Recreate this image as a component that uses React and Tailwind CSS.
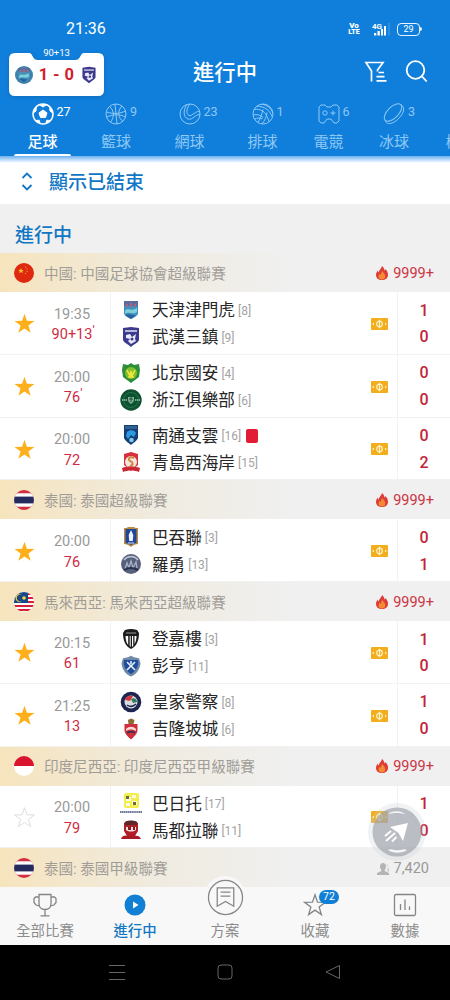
import React from 'react';
import clsx from 'clsx';

const STAR = 'M12 1.8l2.5 7.4 7.9.1-6.3 4.7 2.3 7.6-6.4-4.5-6.4 4.5 2.3-7.6L1.6 9.3l7.9-.1z';

// Small club crests, all on a 22x22 grid
const crests = {
  tianjin: (
    <>
      <path d="M4 2h14v13c-2 3-5 4-7 5-2-1-5-2-7-5z" fill="#3f92bd" />
      <path d="M4 2h14v5H4z" fill="#5a6c9d" />
      <path d="M6 5h2v3H6zM10 4h2v4h-2zM14 5h2v3h-2z" fill="#a9687f" />
      <path d="M5 12c3-4 6 1 12-3v4c-4 3-8-1-12 2z" fill="#7fd0d8" />
      <path d="M5 16c4-2 8 1 11 0l-5 4z" fill="#2a5fa0" />
    </>
  ),
  wuhan: (
    <>
      <path d="M3 2l8-1 8 1v12c-1 3-5 4-8 7-3-3-7-4-8-7z" fill="#3b3a8c" />
      <path d="M5 4h12v2H5z" fill="#b9b8dc" />
      <path d="M6 9l4-1 2 3 4-3-1 5 1 2-5 3-3-3 2-2-4-1z" fill="#e9e8f7" />
      <circle cx="12" cy="13" r="1.5" fill="#3b3a8c" />
    </>
  ),
  beijing: (
    <>
      <path d="M11 1l3 2 5-1 1 6-1 7-8 6-8-6-1-7 1-6 5 1z" fill="#2f8e3a" />
      <circle cx="11" cy="11" r="6" fill="#7fc02f" />
      <path d="M7 8l3 6 1-5 1 5 3-6M8 15h6" stroke="#f3e43b" strokeWidth="1.6" fill="none" />
    </>
  ),
  zhejiang: (
    <>
      <circle cx="11" cy="11" r="10.7" fill="#0d5131" />
      <circle cx="11" cy="11" r="7.5" fill="none" stroke="#2f7b56" strokeWidth=".8" />
      <path d="M2 11h5M15 11h5" stroke="#9fc6af" strokeWidth="1.6" strokeDasharray="1.4 .6" />
      <path d="M8 8h6v3c0 2-2 3-3 4-1-1-3-2-3-4z" fill="#7fae94" />
      <path d="M9 10h4M11 8v5" stroke="#0d5131" strokeWidth=".9" />
    </>
  ),
  nantong: (
    <>
      <path d="M4 1h14v13c-1 3-5 5-7 7-2-2-6-4-7-7z" fill="#163e74" />
      <path d="M5 2h12v3H5z" fill="#2f6193" />
      <path d="M7 8c3-3 8-2 9 1l-2 4-3-2-3 4-2-3z" fill="#2a9be0" />
      <circle cx="11.500" cy="16" r="2.300" fill="#7cc8ee" />
    </>
  ),
  qingdao: (
    <>
      <path d="M4 3l7-2 7 2v11l-7 6-7-6z" fill="#d7303a" />
      <circle cx="11" cy="11" r="6" fill="#f4e6dc" />
      <path d="M14 7c-4-2-7 1-4 3 3 1 4 4 0 5" stroke="#d08b46" strokeWidth="2" fill="none" />
      <path d="M2 17c5-2 13-2 18 0l-1 4c-5-2-11-2-16 0z" fill="#cb2634" />
    </>
  ),
  buriram: (
    <>
      <path d="M4 2c2 0 3 0 4-1h6c1 1 2 1 4 1v16c-2 0-5 1-7 3-2-2-5-3-7-3z" fill="#b98c40" />
      <path d="M5.500 3h11v14c-2 0-4 1-5.500 2-1.500-1-3.500-2-5.500-2z" fill="#1e479c" />
      <path d="M11 4l2.300 5-.5 6H9.200l-.5-6z" fill="#eef2fb" />
      <path d="M8 17h6" stroke="#d9e2f6" />
    </>
  ),
  rayong: (
    <>
      <circle cx="11" cy="11" r="10" fill="#56607b" />
      <path d="M4 7c4-5 11-4 14 0" stroke="#b8c0d0" strokeWidth="1.600" fill="none" />
      <path d="M5 16l2-6 2 5 2-7 2 7 3-6 1 6" stroke="#aab3c6" strokeWidth="1.300" fill="none" />
      <path d="M4 17c5-3 10-2 14 0" stroke="#28324f" strokeWidth="2" fill="none" />
    </>
  ),
  terengganu: (
    <>
      <path d="M5 2c4-1.500 8-1.500 12 0l2 3c0 7-2 13-8 16C5 18 3 12 3 5z" fill="#1b1b1b" />
      <path d="M5.500 8h2.700v9C6.500 15 5.600 12 5.500 8zM9.700 8h1v11l-1-1zM12 8h1.200v10l-1.200 1zM14.500 8h2c0 4-1 6-2 8z" fill="#fff" />
      <path d="M6 5h10" stroke="#999" />
    </>
  ),
  pahang: (
    <>
      <path d="M11 .8l3 1.500 5 1 1.500 5C20 14 17 19 11 21.500 5 19 2 14 1.500 8.300l1.500-5 5-1z" fill="#7189a9" />
      <path d="M4 5h14c1 6-2 11-7 14C6 16 3 11 4 5z" fill="#1f4c9b" />
      <path d="M7 7l4 4 4-4M7 15l4-4 4 4M11 6v3" stroke="#e8eef8" strokeWidth="1.600" fill="none" />
    </>
  ),
  police: (
    <>
      <circle cx="11" cy="11" r="10.300" fill="#1d2650" />
      <circle cx="11" cy="11" r="6.500" fill="#d9dde2" />
      <path d="M5 9c1-4 5-5 8-4l-3 5z" fill="#d8343c" />
      <path d="M11 8c3-2 6 0 6 3l-4 1z" fill="#2f7d59" />
      <path d="M7 14c3 2 6 2 9-1" stroke="#222a50" strokeWidth="1.500" fill="none" />
    </>
  ),
  klcity: (
    <>
      <path d="M8 2l3-1.500L14.500 2l-1 4h-5z" fill="#8c6a34" />
      <path d="M4.500 6h13v7c-1 4-4 6-6.500 8.500C8.500 19 5.500 17 4.500 13z" fill="#cf2f3b" />
      <path d="M6 11c3-3 7-3 10 0v2c-3-2-7-2-10 0z" fill="#f6d9da" />
      <path d="M7 15c3-2 5-2 8 0" stroke="#23305f" strokeWidth="1.500" fill="none" />
    </>
  ),
  barito: (
    <>
      <rect x="4" y="1" width="15" height="15" rx="2" fill="#f2ee4e" />
      <path d="M6 5h5v4H6zM12 9h5v4h-5zM12 3h4v3h-4zM6 11h4v3H6z" fill="#fdfce0" />
      <path d="M6 4h3v3H6zM13 10h3v3h-3z" fill="#6a6a38" />
      <path d="M0 20h22" stroke="#3e4877" strokeWidth="1.300" strokeDasharray="1.500 .4" />
    </>
  ),
  madura: (
    <>
      <path d="M4 4l3-2h8l3 2v8l-3 5H7l-3-5z" fill="#b21e28" />
      <path d="M5 3c3-2 9-2 12 0v3H5z" fill="#5d282b" />
      <path d="M6 8h10v3c-3 2-7 2-10 0z" fill="#f5e3e3" />
      <path d="M8 8h3v3H8zM13 8h2v3h-2z" fill="#8b1820" />
      <path d="M1 20c1-4 5-4 7-3h6c3-1 6 0 7 3z" fill="#a81b25" />
    </>
  ),
};

const flags = {
  china: (
    <>
      <rect width="20" height="20" fill="#de2910" />
      <path d="M7 5l.8 2h2l-1.600 1.300.6 2L7 9.100l-1.800 1.200.6-2L4.200 7h2z" fill="#f7c331" />
      <path d="M11 4h1M12.500 6h1M12.500 8.500h1M11 10.500h1" stroke="#f7a331" />
    </>
  ),
  thailand: (
    <>
      <rect width="20" height="20" fill="#d02f44" />
      <rect y="3.300" width="20" height="13.400" fill="#fff" />
      <rect y="6.600" width="20" height="6.800" fill="#242a5c" />
    </>
  ),
  malaysia: (
    <>
      <rect width="20" height="20" fill="#fff" />
      <path d="M0 2h20M0 6h20M0 10h20M0 14h20M0 18h20" stroke="#d5203a" strokeWidth="1.900" />
      <rect width="14" height="11" fill="#18488c" />
      <path d="M8 2.800a3.600 3.600 0 100 6.400 4 4 0 110-6.400z" fill="#f9d62e" />
      <circle cx="10" cy="6" r="1.800" fill="#f9d62e" />
    </>
  ),
  indonesia: (
    <>
      <rect width="20" height="20" fill="#fff" />
      <rect width="20" height="10" fill="#d9152b" />
    </>
  ),
};

const leagues = [
  {
    flag: 'china',
    name: '中國: 中國足球協會超級聯賽',
    heat: '9999+',
    matches: [
      { fav: true, time: '19:35', min: '90+13', tick: true, home: ['tianjin', '天津津門虎', 8, 1], away: ['wuhan', '武漢三鎮', 9, 0] },
      { fav: true, time: '20:00', min: '76', tick: true, home: ['beijing', '北京國安', 4, 0], away: ['zhejiang', '浙江俱樂部', 6, 0] },
      { fav: true, time: '20:00', min: '72', redCard: true, home: ['nantong', '南通支雲', 16, 0], away: ['qingdao', '青島西海岸', 15, 2] },
    ],
  },
  {
    flag: 'thailand',
    name: '泰國: 泰國超級聯賽',
    heat: '9999+',
    matches: [
      { fav: true, time: '20:00', min: '76', home: ['buriram', '巴吞聯', 3, 0], away: ['rayong', '羅勇', 13, 1] },
    ],
  },
  {
    flag: 'malaysia',
    name: '馬來西亞: 馬來西亞超級聯賽',
    heat: '9999+',
    matches: [
      { fav: true, time: '20:15', min: '61', home: ['terengganu', '登嘉樓', 3, 1], away: ['pahang', '彭亨', 11, 0] },
      { fav: true, time: '21:25', min: '13', home: ['police', '皇家警察', 8, 1], away: ['klcity', '吉隆坡城', 6, 0] },
    ],
  },
  {
    flag: 'indonesia',
    name: '印度尼西亞: 印度尼西亞甲級聯賽',
    heat: '9999+',
    matches: [
      { fav: false, time: '20:00', min: '79', home: ['barito', '巴日托', 17, 1], away: ['madura', '馬都拉聯', 11, 0] },
    ],
  },
  { flag: 'thailand', name: '泰國: 泰國甲級聯賽', viewers: '7,420', matches: [] },
];

const sportIcons = {
  football: (
    <>
      <circle cx="11" cy="11" r="10" strokeWidth="1.500" />
      <path d="M11 7l4 2.900-1.500 4.600h-5L7 9.900z" fill="currentColor" />
      <path d="M7.500 1.800L11 4l3.500-2.200zM1.200 10l2.800-2 .3-4zM20.800 10L18 8l-.3-4zM4 17.500l3.200-.3 1 3.200zM18 17.500l-3.200-.3-1 3.200z" fill="currentColor" />
    </>
  ),
  basketball: (
    <>
      <circle cx="11" cy="11" r="10" />
      <path d="M10 1l2 20M1.500 9c6 2 13 2 19-1M4.500 3.500c5 4 5 11 1 15.500M17 3c-5 5-4 12 1 15.500M2 14c6-3 13-3 18.500 0" />
    </>
  ),
  tennis: (
    <>
      <circle cx="11" cy="11" r="10" />
      <path d="M8 1.500C4 7 4 14 9 16c5 1.500 7-5 12-4.500M11 1C7 6 7 11 10 12.500c3 1 4-3 10.500-4.500" />
    </>
  ),
  volleyball: (
    <>
      <circle cx="11" cy="11" r="10" />
      <path d="M2 6.500c6-1 12 1 15 12M5 3.200c7 0 13 4 15 10.500M10 1.200c5 1 9 4 11 9M1.200 12c4-1 7 0 10 2.500M2.500 16c3-1.500 6-1 8 0M11 6.500c-1 4-2 8-5 13M15 9.500c-.5 4-2 8-5 11.400" />
    </>
  ),
  esports: (
    <>
      <path d="M3 2h4l2 2h4l2-2h4l2 2v14l-2 2h-3l-3-4H9l-3 4H3l-2-2V4z" strokeLinejoin="round" />
      <circle cx="7" cy="10" r="2.200" />
      <path d="M12.500 10h5M15 7.500v5" />
    </>
  ),
  hockey: (
    <>
      <ellipse cx="10" cy="9.500" rx="11" ry="5.500" transform="rotate(-45 10 9.500)" />
      <path d="M2.200 17.300c.5 3 3.500 4.200 7 2.700 5-2 10-7.500 11.300-12 .6-3-.4-5-2.700-6.300" />
    </>
  ),
};

const tabs = [
  { icon: 'football', label: '足球', count: 27, width: 'w-[73px]', active: true },
  { icon: 'basketball', label: '籃球', count: 9, width: 'w-[74px]' },
  { icon: 'tennis', label: '網球', count: 23, width: 'w-[73px]' },
  { icon: 'volleyball', label: '排球', count: 1, width: 'w-[73px]' },
  { icon: 'esports', label: '電競', count: 6, width: 'w-[59px]' },
  { icon: 'hockey', label: '冰球', count: 3, width: 'w-[72px]' },
  { label: '棒球', width: 'w-[61px]' },
];

function Crest({ name, className = 'size-[22px]' }) {
  return <svg viewBox="0 0 22 22" className={clsx('shrink-0', className)}>{crests[name]}</svg>;
}

function StatusBar() {
  return (
    <div className="h-[51px] pt-[7px] pl-[66px] pr-7 flex items-center justify-between text-white">
      <span className="text-[16px]">21:36</span>
      <div className="flex items-center">
        <div className="w-3 mr-3 text-[8px] leading-[7px] font-black text-center">
          <div>Vo</div>
          <div className="text-[7px]">LTE</div>
        </div>
        <svg viewBox="0 0 18 14" className="w-[18px] h-3.5 mr-[7px]" fill="#fff">
          <text x="0" y="6.500" fontSize="8" fontWeight="700">4G</text>
          <path d="M2 11h2.300v2.500H2zM5.500 9h2.300v4.500H5.500zM9 7h2v6.500H9zM12 4h2v9.500h-2z" />
          <path d="M16.500 1h1v12.500h-1z" opacity=".25" />
        </svg>
        <div className="flex items-center">
          <div className="w-[23px] h-[13px] rounded-[4px] border-[1.500px] border-white/90 text-[9px] leading-[10px] text-center">29</div>
          <div className="w-[2px] h-1 bg-white/90 rounded-r" />
        </div>
      </div>
    </div>
  );
}

function MiniScore() {
  return (
    <div className="relative w-[95px] h-[50px] ml-[9px]">
      <svg viewBox="0 0 95 50" className="absolute inset-0 drop-shadow-sm">
        <path d="M6 2h14c4 0 3 7 9 7h37c6 0 5-7 9-7h14q6 0 6 6v31q0 6-6 6H6q-6 0-6-6V8q0-6 6-6z" fill="#fff" />
      </svg>
      <div className="relative flex flex-col">
        <span className="h-2.5 -mt-[3px] text-center text-[9.500px] leading-[10px] text-white">90+13</span>
        <div className="h-[34px] flex items-center justify-between px-1.5">
          <span className="size-[18px] rounded-full overflow-hidden bg-[#3f83ad]">
            <Crest name="tianjin" className="size-[18px]" />
          </span>
          <span className="text-[16.500px] font-bold tracking-[0.4px] text-[#d3202f]">1 - 0</span>
          <Crest name="wuhan" className="size-[18px]" />
        </div>
      </div>
    </div>
  );
}

function Header() {
  return (
    <header className="h-[156px] shrink-0 bg-[#107fdc] text-white overflow-hidden">
      <StatusBar />
      <div className="h-[50px] grid grid-cols-3">
        <MiniScore />
        <h1 className="text-center text-[21.300px] leading-[44px] font-medium">進行中</h1>
        <div className="flex justify-end items-start gap-[18px] pt-[9px] pr-[22px]">
          <svg viewBox="0 0 23 23" className="size-[23px]" fill="none" stroke="#fff" strokeWidth="1.700">
            <path d="M7.500 21.500V11L2 2.500h17L13.500 10v1.500M14.500 12.500h5.500M12.500 16.700h8M12.500 20.800h10" />
          </svg>
          <svg viewBox="0 0 23 23" className="size-[23px]" fill="none" stroke="#fff" strokeWidth="1.800">
            <circle cx="10.500" cy="10" r="8.800" />
            <path d="M16.700 16.200l5 5.300" />
          </svg>
        </div>
      </div>
      <nav className="h-[55px] pl-1.5 flex">
        {tabs.map((tab) => (
          <div
            key={tab.label}
            className={clsx('shrink-0 h-full flex flex-col items-center', tab.width, tab.active ? 'text-white' : 'text-[#8fc8f4]')}
          >
            <div className="relative size-[22px] mt-[2px]">
              {tab.icon && (
                <svg viewBox="0 0 22 22" className="size-[22px]" fill="none" stroke="currentColor" strokeWidth="1">
                  {sportIcons[tab.icon]}
                </svg>
              )}
              <span className="absolute left-[25px] top-[1px] text-[12.500px] leading-4">{tab.count}</span>
            </div>
            <span className={clsx('mt-[7px] text-[15px] leading-[20px] whitespace-nowrap', tab.active && 'font-medium')}>{tab.label}</span>
            {tab.active && <span className="mt-[2px] w-[57px] h-[2px] bg-white rounded-t" />}
          </div>
        ))}
      </nav>
    </header>
  );
}

function Heat({ value }) {
  return (
    <div className="flex items-center gap-[5px] pt-[2px] text-[14.500px] text-[#cb3544]">
      <svg viewBox="0 0 12 14" className="w-3 h-3.5 -mt-[2px]">
        <path d="M6 0c2.500 2 2.300 4 2.800 4.500.6-.5.5-1.600.5-1.600C11.500 5 12 7 12 9c0 3-2.500 5-6 5s-6-2-6-5c0-2 1-3.300 1.800-4.500.2 1 .3 1.500 1 2C3 3.500 5.500 3 6 0z" fill="#dd3d36" />
        <path d="M6.300 5c1 2 3 3 3 5.500 0 2-1.300 3-3.300 3s-3.400-1-3.400-2.800C2.600 9 3.500 8 4 7.500c.2.800.5 1.200 1 1.500 0-1.500.5-3 1.300-4z" fill="#f58a35" />
      </svg>
      {value}
    </div>
  );
}

function LeagueHeader({ league }) {
  return (
    <div className="h-[39px] flex items-center pl-3.5 pr-4 bg-linear-to-r from-[#f6e4bd] via-[#f0ebe0] via-35% to-[#f0f0f0] to-65%">
      <svg viewBox="0 0 20 20" className="size-5 rounded-full">{flags[league.flag]}</svg>
      <span className="ml-[10px] mt-1 flex-1 text-[14.550px] leading-5 whitespace-nowrap text-[#a09d98]">{league.name}</span>
      {league.heat ? (
        <Heat value={league.heat} />
      ) : (
        <div className="mr-[5px] pt-[2px] flex items-center gap-[5px] text-[14.500px] text-[#999]">
          <svg viewBox="0 0 12 12" className="size-3" fill="#b4b4b4">
            <path d="M3 3.500C3 1.200 4.200 0 6 0s3 1.200 3 3.500C9 5 8.400 6 7.700 6.800v1.300L12 10v2H0v-2l4.300-1.900V6.800C3.600 6 3 5 3 3.500z" />
            <path d="M9.500 1c2 0 2.500 4 .7 5.500V8L12 9V6z" opacity=".6" />
          </svg>
          {league.viewers}
        </div>
      )}
    </div>
  );
}

function TeamLine({ team, redCard }) {
  const [crest, name, rank] = team;
  return (
    <div className="h-[26.800px] flex items-center">
      <Crest name={crest} className="size-[22px] -mt-[2px]" />
      <span className="ml-2.5 pt-[1px] text-[16.600px] leading-[26px] text-[#262626]">{name}</span>
      <span className="ml-[3px] text-[12px] text-[#a3a3a3]">[{rank}]</span>
      {redCard && <span className="ml-[5px] -mt-px w-3 h-3.5 rounded-[2px] bg-[#e11d35]" />}
    </div>
  );
}

function MatchRow({ match }) {
  return (
    <div className="h-[62.750px] flex bg-white border-b border-[#f2f2f2]">
      <div className="w-12 flex items-center justify-center">
        <svg viewBox="0 0 24 24" className="size-[23px] mt-[2px]">
          <path d={STAR} fill={match.fav ? '#fdb01c' : 'none'} stroke={match.fav ? 'none' : '#ddd'} />
        </svg>
      </div>
      <div className="w-[63px] pr-[14px] flex flex-col items-center justify-center border-r border-[#f2f2f2] leading-[20.500px] pt-[5px]">
        <span className="text-[14.500px] text-[#999]">{match.time}</span>
        <span className="relative text-[14.500px] text-[#cf2b43]">
          {match.min}
          {match.tick && <span className="absolute left-full -top-[4px] text-[13px]">'</span>}
        </span>
      </div>
      <div className="flex-1 pl-[9px] pt-[3px] flex flex-col justify-center">
        <TeamLine team={match.home} redCard={match.redCard} />
        <TeamLine team={match.away} />
      </div>
      <div className="flex items-center pr-[9px] pt-[2px]">
        <svg viewBox="0 0 17 12" className="w-[17px] h-3">
          <rect width="17" height="12" rx="1" fill="#f2ae1d" />
          <circle cx="8.500" cy="6" r="2.800" fill="none" stroke="#fff3c7" strokeWidth="1.200" />
          <path d="M8.500 1.800v8.400M2.300 5v2M14.700 5v2" stroke="#fff3c7" strokeWidth="1.200" />
        </svg>
      </div>
      <div className="w-[53px] pt-[3px] flex flex-col items-center justify-center border-l border-[#f2f2f2] text-[16px] leading-[26.800px] font-medium text-[#bf2638]">
        <span>{match.home[3]}</span>
        <span>{match.away[3]}</span>
      </div>
    </div>
  );
}

function LiveButton() {
  return (
    <svg viewBox="0 0 60 60" className="absolute left-[366px] top-[802px] size-[60px]">
      <circle cx="31" cy="30" r="29" fill="#c8ccd4" opacity=".25" />
      <circle cx="31" cy="30" r="24.500" fill="#9fa3ab" opacity=".68" />
      <path d="M21 12.500c5-4.500 14-4.500 19 0-5-2-14-2-19 0zM22 48c5 3.500 14 3.500 19 0-4-2-6 1-9.500 0-3.500 1-5.500-2-9.500 0z" fill="#f6f6f7" />
      <path d="M24 25l18-4-5 18-4.500-8z" fill="#fff" />
      <path d="M19 34l6-5M20 39l9-8M26 39.500l4.500-4.500" stroke="#fff" strokeWidth="1.800" />
    </svg>
  );
}

const navItems = [
  {
    label: '全部比賽',
    icon: <path d="M6 1.500h12v9c0 4-2.500 6-6 6s-6-2-6-6zM6 4H2.500L1 5.500v4L3 12l3.500 1M18 4h3.500L23 5.500v4L21 12l-3.500 1M12 16.500v6M7.500 22.800h9" />,
  },
  {
    label: '進行中',
    active: true,
    icon: (
      <>
        <circle cx="12" cy="12" r="10.500" fill="#1180d4" stroke="none" />
        <path d="M10 8.500l5.500 3.500-5.500 3.500z" fill="#fff" stroke="none" />
      </>
    ),
  },
  { label: '方案', raised: true },
  { label: '收藏', badge: 72, icon: <path d={STAR} /> },
  {
    label: '數據',
    icon: (
      <>
        <rect x="1.500" y="1.500" width="21" height="21" rx="1.500" />
        <path d="M7.500 11v6M12 6.500v10.500M16.500 13.500v3.500" />
      </>
    ),
  },
];

function BottomNav() {
  return (
    <nav className="relative h-[58px] shrink-0 grid grid-cols-5 bg-[#f8f8f8]">
      {navItems.map((item) => (
        <div key={item.label} className={clsx('flex flex-col items-center', item.active ? 'text-[#1176c4]' : 'text-[#8c8c8c]')}>
          {item.raised ? (
            <div className="relative -mt-[11px] size-[42px] rounded-full bg-[#f8f8f8] flex justify-center pt-[3px]">
              <svg viewBox="0 0 38 38" className="size-[37px]" fill="none" stroke="#858585" strokeWidth="1.300">
                <circle cx="19" cy="19" r="17.500" />
                <path d="M10.500 9h17v19l-8.500-5-8.500 5zM14 13.500h10M14 17.500h10" />
              </svg>
            </div>
          ) : (
            <div className="relative mt-[6px] size-6">
              <svg viewBox="0 0 24 24" className="size-6" fill="none" stroke="#858585" strokeWidth="1.300">{item.icon}</svg>
              {item.badge && (
                <span className="absolute left-4 -top-[3px] w-5 h-[14px] rounded-full bg-[#1180d4] text-white text-[10.500px] leading-[14px] text-center">
                  {item.badge}
                </span>
              )}
            </div>
          )}
          <span className={clsx('text-[14.400px] leading-5 whitespace-nowrap', item.raised ? 'mt-[4px]' : 'mt-[5px]', item.active && 'font-medium')}>{item.label}</span>
        </div>
      ))}
    </nav>
  );
}

export default function App() {
  return (
    <div className="relative w-[450px] h-[1000px] flex flex-col overflow-hidden bg-[#f0f0f0] font-[Roboto,'Noto_Sans_CJK_TC',sans-serif]">
      <Header />
      <main className="h-[731px] shrink-0 overflow-hidden">
        <div className="h-12 pl-5 flex items-center bg-linear-to-b from-[#69b1ef] to-white to-[7px]">
          <svg viewBox="0 0 14 20" className="w-3.5 h-5 mt-1" fill="none" stroke="#1176c4" strokeWidth="1.800">
            <path d="M2.500 6L7 1.500 11.500 6M2.500 13L7 17.500l4.500-4.500" />
          </svg>
          <span className="ml-[15px] mt-[6px] text-[19px] leading-6 font-medium text-[#1176c4]">顯示已結束</span>
        </div>
        <h2 className="h-[49px] pl-[15px] pt-[20px] text-[19px] leading-6 font-medium text-[#1176c4]">進行中</h2>
        {leagues.map((league) => (
          <section key={league.name}>
            <LeagueHeader league={league} />
            {league.matches.map((match) => (
              <MatchRow key={match.home[1]} match={match} />
            ))}
          </section>
        ))}
      </main>
      <LiveButton />
      <BottomNav />
      <footer className="h-[55px] shrink-0 bg-black flex justify-center gap-[92px] pt-[19px]">
        <svg viewBox="0 0 16 16" className="size-4" fill="none" stroke="#666"><path d="M0 1.500h16M0 8.500h16M0 15.500h16" /></svg>
        <svg viewBox="0 0 16 16" className="size-4" fill="none" stroke="#666"><rect x="1" y="1" width="14" height="14" rx="3" /></svg>
        <svg viewBox="0 0 16 16" className="size-4" fill="none" stroke="#666"><path d="M14.500 1.500v13L1 8z" strokeLinejoin="round" /></svg>
      </footer>
    </div>
  );
}
